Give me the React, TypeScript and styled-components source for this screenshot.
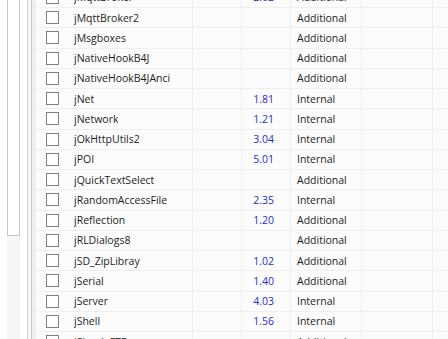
import React from "react";
import styled, { createGlobalStyle } from "styled-components";

interface Library {
    name: string;
    version: string;
    status: "Internal" | "Additional";
}

const libraries: Library[] = [
    { name: "jMqttBroker", version: "2.02", status: "Additional" },
    { name: "jMqttBroker2", version: "", status: "Additional" },
    { name: "jMsgboxes", version: "", status: "Additional" },
    { name: "jNativeHookB4J", version: "", status: "Additional" },
    { name: "jNativeHookB4JAncillary", version: "", status: "Additional" },
    { name: "jNet", version: "1.81", status: "Internal" },
    { name: "jNetwork", version: "1.21", status: "Internal" },
    { name: "jOkHttpUtils2", version: "3.04", status: "Internal" },
    { name: "jPOI", version: "5.01", status: "Internal" },
    { name: "jQuickTextSelect", version: "", status: "Additional" },
    { name: "jRandomAccessFile", version: "2.35", status: "Internal" },
    { name: "jReflection", version: "1.20", status: "Additional" },
    { name: "jRLDialogs8", version: "", status: "Additional" },
    { name: "jSD_ZipLibray", version: "1.02", status: "Additional" },
    { name: "jSerial", version: "1.40", status: "Additional" },
    { name: "jServer", version: "4.03", status: "Internal" },
    { name: "jShell", version: "1.56", status: "Internal" },
    { name: "jSimpleFTP", version: "", status: "Additional" },
];

const GlobalStyle = createGlobalStyle`
    html, body {
        margin: 0;
        padding: 0;
        background: #ffffff;
        overflow: hidden;
    }
    body {
        font-family: "Open Sans", "Noto Sans", sans-serif;
    }
`;

const LibraryRow: React.FC<{ lib: Library }> = ({ lib }) => (
    <Row>
        <NameCell>
            <CheckBox />
            <Name>{lib.name}</Name>
        </NameCell>
        <Cell />
        <VersionCell>{lib.version}</VersionCell>
        <StatusCell>{lib.status}</StatusCell>
        <Cell />
        <Cell />
    </Row>
);

const App: React.FC = () => {
    return (
        <>
            <GlobalStyle />
            <Window>
                <SidePanel>
                    <Gutter />
                    <ListColumn>
                        <ListBox />
                    </ListColumn>
                    <Gutter />
                    <Splitter />
                </SidePanel>
                <Table>
                    <Rows>
                        {libraries.map((lib) => (
                            <LibraryRow key={lib.name} lib={lib} />
                        ))}
                    </Rows>
                </Table>
            </Window>
        </>
    );
};

const Window = styled.div`
    display: flex;
    width: 448px;
    height: 339px;
    overflow: hidden;
    background: #ffffff;
`;

const SidePanel = styled.div`
    display: flex;
    width: 36px;
    flex-shrink: 0;
`;

const Gutter = styled.div`
    width: 7px;
    background: #ffffff;
`;

const ListColumn = styled.div`
    display: flex;
    flex-direction: column;
    width: 13px;
    background: #f6f6f6;
`;

const ListBox = styled.div`
    height: 236px;
    box-sizing: border-box;
    background: #ffffff;
    border: 1px solid #c4c4c4;
    border-top: none;
`;

const Splitter = styled.div`
    width: 9px;
    box-sizing: border-box;
    background: #efefef;
    border-left: 1px solid #d2d2d2;
    box-shadow: inset 3px 0 0 #f7f7f7, inset 4px 0 0 #c9c9c9;
`;

const Table = styled.div`
    flex: 1;
    overflow: hidden;
    background: #fcfcfc;
`;

const Rows = styled.div`
    margin-top: -12.25px;
`;

const Row = styled.div`
    display: grid;
    grid-template-columns: 157px 49px 49px 71px 71px 60px;
    height: 20.25px;
    box-sizing: border-box;
    border-bottom: 1px solid #efefef;
    font-size: 10.5px;
    color: #1c1c1c;
`;

const Cell = styled.div`
    display: flex;
    align-items: center;
    box-sizing: border-box;
    border-right: 1px solid #f1f1f1;
    overflow: hidden;
    white-space: nowrap;
`;

const NameCell = styled(Cell)`
    padding-left: 10px;
`;

const CheckBox = styled.span`
    width: 13px;
    height: 13px;
    box-sizing: border-box;
    border: 1px solid #808080;
    background: #ffffff;
    flex-shrink: 0;
`;

const Name = styled.span`
    margin-left: 15px;
    max-width: 96px;
    overflow: hidden;
`;

const VersionCell = styled(Cell)`
    justify-content: flex-end;
    padding-right: 16px;
    color: #2a2ad2;
`;

const StatusCell = styled(Cell)`
    padding-left: 6px;
`;

export default App;
